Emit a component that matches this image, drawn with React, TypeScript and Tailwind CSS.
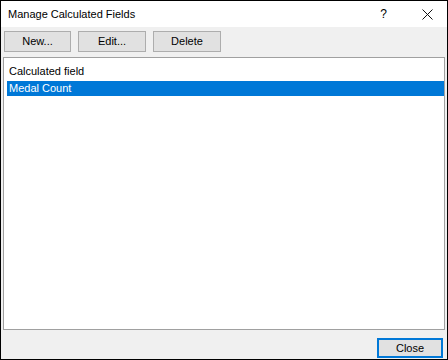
import React from "react";

const font = { fontFamily: '"Segoe UI", "Liberation Sans", Arial, sans-serif' };

function DlgButton({ label, wide }: { label: string; wide?: boolean }) {
  return (
    <button
      className={`h-[21px] ${wide ? "w-[68px]" : "w-[67px]"} bg-[#e1e1e1] border border-[#adadad] text-[11px] leading-none text-black flex items-center justify-center`}
    >
      {label}
    </button>
  );
}

export default function App() {
  return (
    <div
      className="w-[448px] h-[360px] border border-black bg-[#f0f0f0] flex flex-col text-black text-[11px]"
      style={font}
    >
      {/* title bar */}
      <div className="h-[26px] bg-white flex items-center pl-[7px] shrink-0">
        <span className="leading-none text-[11px]">Manage Calculated Fields</span>
        <span className="ml-auto mr-[35px] text-[12px] leading-none">?</span>
        <svg width="11" height="11" viewBox="0 0 11 11" className="mr-[14px]">
          <path d="M0.5 0.5 L10.5 10.5 M10.5 0.5 L0.5 10.5" stroke="#111" strokeWidth="1" fill="none" />
        </svg>
      </div>

      {/* toolbar */}
      <div className="flex gap-[7px] pl-[3px] pt-[4px] shrink-0">
        <DlgButton label="New..." />
        <DlgButton label="Edit..." wide />
        <DlgButton label="Delete" wide />
      </div>

      {/* list */}
      <div className="mx-[2px] mt-[5px] flex-1 bg-white border border-[#a0a0a0] flex flex-col">
        <div className="pl-[5px] pt-[5px] h-[21px] leading-[16px]">Calculated field</div>
        <div className="ml-[3px] mt-[2px] h-[15px] bg-[#0078d7] text-white pl-[2px] leading-[15px]">
          Medal Count
        </div>
      </div>

      {/* footer */}
      <div className="h-[29px] shrink-0 flex justify-end items-start pt-[8px] pr-[4px]">
        <button className="w-[66px] h-[20px] bg-[#e1e1e1] border-2 border-[#0078d7] text-[11px] leading-none flex items-center justify-center">
          Close
        </button>
      </div>
    </div>
  );
}
